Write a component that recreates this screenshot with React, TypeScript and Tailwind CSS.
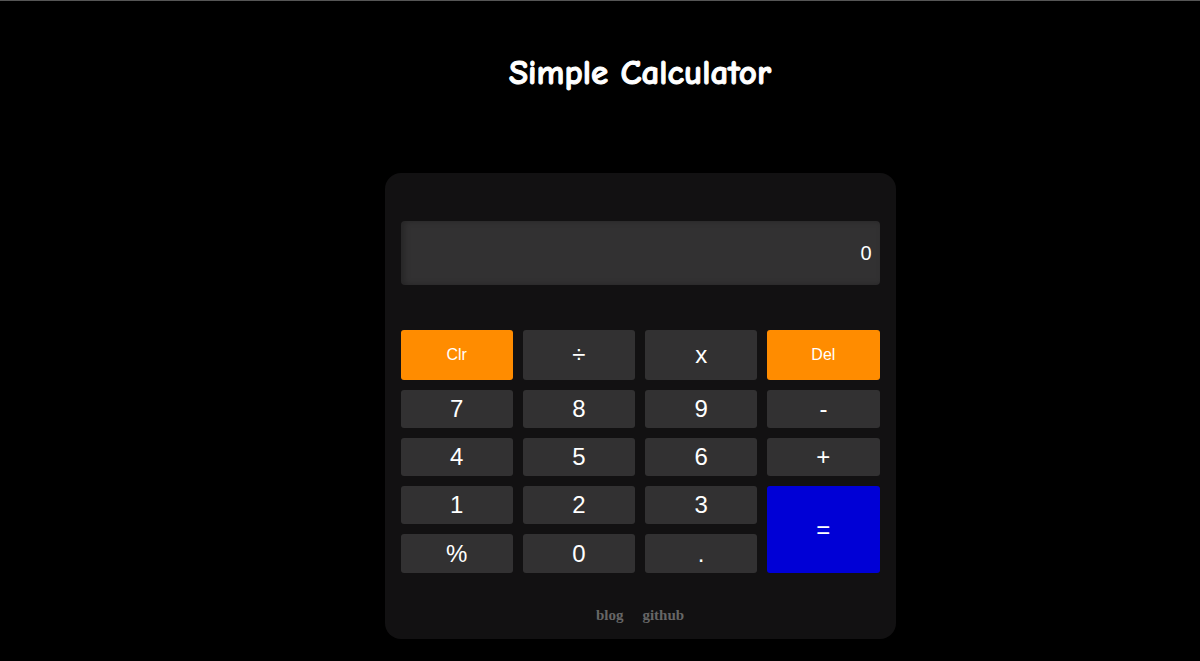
import React from 'react';

type Key = { label: string; kind?: 'op' | 'accent' | 'equals'; small?: boolean; tall?: boolean };

const rows: Key[][] = [
  [{ label: 'Clr', kind: 'accent', small: true }, { label: '÷' }, { label: 'x' }, { label: 'Del', kind: 'accent', small: true }],
  [{ label: '7' }, { label: '8' }, { label: '9' }, { label: '-' }],
  [{ label: '4' }, { label: '5' }, { label: '6' }, { label: '+' }],
];

const KeyButton: React.FC<{ k: Key; className?: string }> = ({ k, className = '' }) => {
  const color =
    k.kind === 'accent' ? 'bg-[#ff8c00]' : k.kind === 'equals' ? 'bg-[#0000d6]' : 'bg-[#323132]';
  return (
    <button
      className={`${color} ${k.small ? 'text-[16px]' : 'text-[24px]'} text-white rounded-[3px] flex items-center justify-center ${className}`}
    >
      {k.label}
    </button>
  );
};

export default function App() {
  return (
    <div
      className="min-h-[661px] bg-black border-t border-[#555] flex flex-col items-center pl-[80px]"
      style={{ fontFamily: 'Arial, "Liberation Sans", sans-serif' }}
    >
      <h1
        className="mt-[49px] text-[35px] font-bold text-white leading-[46px] [-webkit-text-stroke:1px_white]"
        style={{ fontFamily: '"Comic Sans MS", "Comic Neue", cursive' }}
      >
        Simple Calculator
      </h1>

      <div className="mt-[77px] w-[511px] h-[466px] bg-[#121112] rounded-[16px] px-[16px] pt-[48px] flex flex-col">
        <div className="h-[64px] bg-[#323132] rounded-[4px] shadow-[inset_3px_0_6px_rgba(0,0,0,0.25)] flex items-center justify-end pr-[8px] text-white text-[20px]">
          0
        </div>

        <div className="mt-[45px] grid grid-cols-4 gap-[10px]">
          {rows[0].map((k) => (
            <KeyButton key={k.label} k={k} className="h-[50px]" />
          ))}
          {rows.slice(1).flat().map((k) => (
            <KeyButton key={k.label} k={k} className="h-[38px]" />
          ))}
          <KeyButton k={{ label: '1' }} className="h-[38px]" />
          <KeyButton k={{ label: '2' }} className="h-[38px]" />
          <KeyButton k={{ label: '3' }} className="h-[38px]" />
          <KeyButton k={{ label: '=', kind: 'equals' }} className="row-span-2 h-auto" />
          <KeyButton k={{ label: '%' }} className="h-[39px]" />
          <KeyButton k={{ label: '0' }} className="h-[39px]" />
          <KeyButton k={{ label: '.' }} className="h-[39px]" />
        </div>

        <div
          className="mt-[31px] flex justify-center gap-[19px] text-[15px] font-bold text-[#666]"
          style={{ fontFamily: '"Liberation Serif", "Times New Roman", serif' }}
        >
          <a href="#">blog</a>
          <a href="#">github</a>
        </div>
      </div>
    </div>
  );
}
